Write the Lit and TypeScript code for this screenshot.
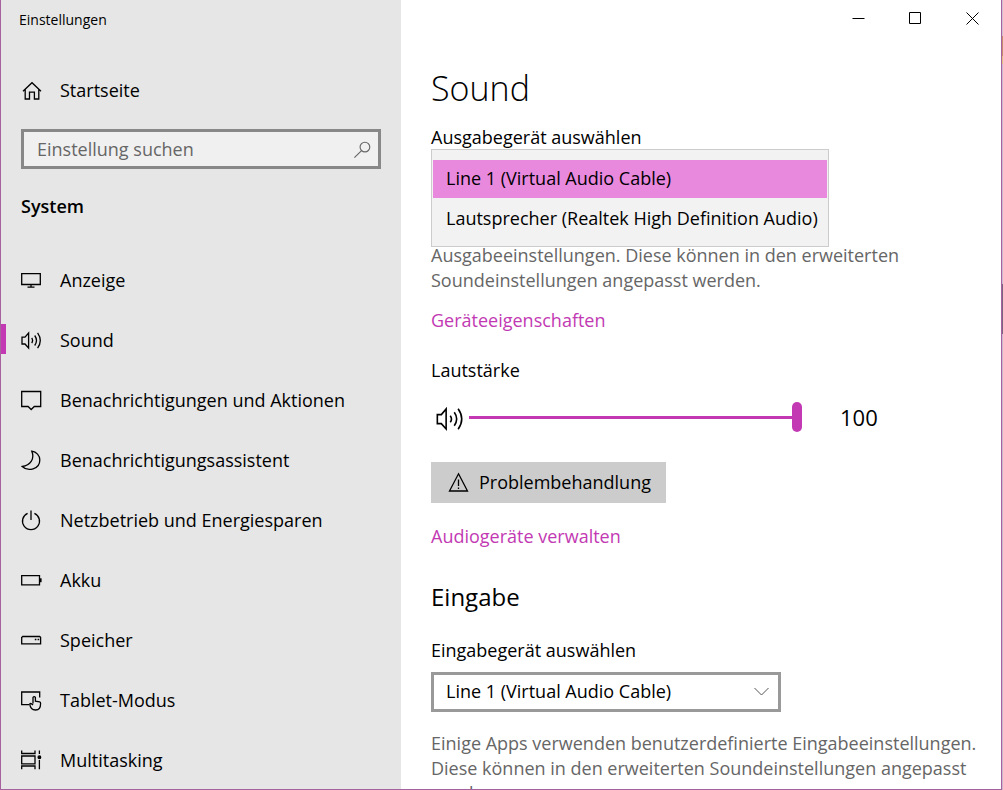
import { LitElement, html, css, svg } from "lit";
import { customElement, state } from "lit/decorators.js";

const speaker = svg`<path d="M1 7.200h3L7.600 3v15L4 14h-3z"/><path d="M10.700 8q1.800 2.500 0 5M13.700 5.500q3.600 5 0 10M16.600 2.800q5.400 7.700 0 15.400"/>`;

const pages = [
  { label: "Anzeige", icon: svg`<path d="M.7 3.700h18.600v10.800H.7zM10 14.500v2.600M6.500 17.100h7"/>` },
  { label: "Sound", icon: speaker, current: true },
  { label: "Benachrichtigungen und Aktionen", icon: svg`<path d="M.7 1.500h19v15h-6.400l-3.100 3-3.100-3H.7z"/>` },
  { label: "Benachrichtigungsassistent", icon: svg`<path d="M10.800 1.200c3.200 8-1.600 14.300-9.600 15.300 5.600 5.400 17.600 3 17.600-6.600 0-4.600-3.400-8-8-8.700z"/>` },
  { label: "Netzbetrieb und Energiesparen", icon: svg`<path d="M10 .500v9.500M6.600 3.300a8.500 8.500 0 1 0 6.800 0"/>` },
  { label: "Akku", icon: svg`<path d="M.7 5.700h17.800v9.100H.7z"/><path d="M19.700 8.300v3.900" stroke-width="1.800"/>` },
  { label: "Speicher", icon: svg`<path d="M.7 7.400l1-.9h16.900l1 .9v6.400H.7z"/><path d="M13.800 9.500h1.600M16.600 9.500h1.600" stroke-width="1.500"/>` },
  { label: "Tablet-Modus", icon: svg`<path d="M8.300 14.700H.7V2h18v5.500"/><path d="M12 13.500V7.400q1.200-1.600 2.400 0v3.700l4.200.8q1.100.3 1 1.600c0 3.500-.5 6.500-5 6.500-3.600 0-5.500-2.500-5.800-6q1-1.300 3.200 1"/>` },
  { label: "Multitasking", icon: svg`<path d="M.7.500v3h13.300v-3M.7 6h13.300v7.800H.7zM.7 19.300v-3.300h13.300v3.300M18.400.500v3.600M18.400 10v9.300"/><circle cx="18.400" cy="7.200" r="1.300" fill="currentColor"/>` },
];

const glyph = (body: unknown) =>
  html`<svg class="glyph" viewBox="0 0 21 21" aria-hidden="true">${body}</svg>`;

@customElement("app-root")
export class AppRoot extends LitElement {
  @state() private volume = 100;

  static styles = css`
    :host {
      --accent: #c239b3;
      --frame: #a5629c;
      display: block;
      height: 100vh;
      box-sizing: border-box;
      overflow: hidden;
      padding-right: 1px;
      background: linear-gradient(
        #d2bfd2 36px, #c98d6c 36px 56px, #e5bd7d 56px 64px, #cdb9cf 64px 284px,
        #7d657f 284px 334px, #cdb7cd 334px
      );
      color: #000;
      font: 18px/25px "Open Sans", "Noto Sans", sans-serif;
    }
    * { box-sizing: border-box; }
    .window {
      display: grid;
      grid-template-columns: 400px minmax(0, 1fr);
      height: 100%;
      border: solid var(--frame);
      border-width: 0 1px 1px;
      background: #fff;
      overflow: hidden;
    }
    .glyph {
      width: 21px;
      height: 21px;
      flex: none;
      fill: none;
      stroke: currentColor;
      stroke-width: 1.300;
    }
    .sidebar { background: #e6e6e6; overflow: hidden; }
    .title { height: 38px; font-size: 14px; line-height: 40px; padding-left: 18px; }
    .item {
      display: flex;
      align-items: center;
      gap: 18px;
      height: 60px;
      padding-left: 20px;
      color: inherit;
      text-decoration: none;
    }
    .home { margin-top: 22px; }
    .current {
      background: linear-gradient(var(--accent), var(--accent)) 0 14px / 5px 30px no-repeat;
    }
    .search {
      display: flex;
      align-items: center;
      height: 40px;
      margin: 9px 20px 25px;
      padding-right: 7px;
      border: 3px solid #888;
      background: #f0f0f0;
      color: #666;
    }
    .search input {
      flex: 1;
      min-width: 0;
      padding: 0 13px;
      border: 0;
      outline: 0;
      background: none;
      font: inherit;
      color: inherit;
    }
    .search input::placeholder { color: #666; opacity: 1; }
    .search .glyph { width: 17px; height: 17px; stroke-width: 1.400; }
    .group { margin: 0 20px 31px; font-size: 18px; font-weight: 600; line-height: 25px; }

    .main { overflow: hidden; }
    .caption { display: flex; justify-content: flex-end; height: 37px; margin-bottom: 1px; }
    .caption button {
      display: grid;
      place-items: center;
      width: 57px;
      padding: 0;
      border: 0;
      background: none;
      color: #000;
    }
    .caption svg { width: 13px; height: 13px; fill: none; stroke: currentColor; }
    .content { padding: 25px 16px 0 30px; max-width: 600px; }
    h1 { margin: 0 0 12px; font-size: 34px; font-weight: 300; line-height: 50px; }
    h2 { margin: 33px 0 26px; font-size: 24px; font-weight: 400; line-height: 30px; }
    .label { display: block; line-height: 24px; }
    .picker { position: relative; height: 94px; }
    .list {
      position: absolute;
      z-index: 1;
      width: 398px;
      max-width: 100%;
      height: 98px;
      padding: 10px 1px 8px;
      border: 1px solid #ccc;
      border-radius: 0;
      outline: 0;
      overflow: hidden;
      background: #f2f2f2;
      color: #000;
      font: inherit;
    }
    .list option { height: 38px; margin-bottom: 2px; padding: 6px 0 0 13px; }
    .list option:checked {
      background: linear-gradient(#e989de, #e989de);
      color: #000;
    }
    .note { margin: 0; color: #666; }
    .link { display: block; width: fit-content; color: var(--accent); text-decoration: none; }
    .props { margin: 15px 0 25px; }
    .volume { display: flex; align-items: center; height: 30px; margin: 20px 0 30px; padding-left: 5px; }
    .volume .glyph { width: 28px; height: 28px; margin: 4px 5px 0 0; stroke-width: 1.200; }
    .volume input {
      width: 333px;
      height: 30px;
      margin: 0 38px 0 0;
      appearance: none;
      background: none;
    }
    .volume input::-webkit-slider-runnable-track { height: 3px; background: var(--accent); }
    .volume input::-webkit-slider-thumb {
      appearance: none;
      width: 10px;
      height: 30px;
      margin-top: -14px;
      border-radius: 5px;
      background: var(--accent);
    }
    .volume output { font-size: 22px; }
    .trouble {
      display: flex;
      align-items: center;
      gap: 10px;
      height: 41px;
      margin-bottom: 21px;
      padding: 0 15px 0 17px;
      border: 0;
      background: #ccc;
      color: #000;
      font: inherit;
    }
    .field { position: relative; width: 350px; max-width: 100%; margin: 10px 0 19px; }
    .field select {
      display: block;
      width: 100%;
      height: 40px;
      padding: 0 36px 2px 12px;
      border: 3px solid #999;
      border-radius: 0;
      appearance: none;
      background: #fff;
      color: #000;
      font: inherit;
    }
    .chevron {
      position: absolute;
      right: 12px;
      top: 15px;
      width: 15px;
      height: 10px;
      fill: none;
      stroke: #555;
      pointer-events: none;
    }
  `;

  private onVolume(e: Event) {
    this.volume = Number((e.target as HTMLInputElement).value);
  }

  render() {
    return html`
      <div class="window">
        <aside class="sidebar">
          <div class="title">Einstellungen</div>
          <a class="item home" href="#start">
            ${glyph(svg`<path d="M2 11.200l9-8.500 9 8.500M4.200 9.200v9.800h4.300v-6.800h4.900V19h4.400V9.200"/>`)}
            <span>Startseite</span>
          </a>
          <label class="search">
            <input type="text" placeholder="Einstellung suchen" aria-label="Einstellung suchen" />
            ${glyph(svg`<circle cx="13.500" cy="7.500" r="6"/><path d="M9.300 11.800L.5 20.500"/>`)}
          </label>
          <h3 class="group">System</h3>
          <nav>
            ${pages.map(
              (p) => html`<a class="item ${p.current ? "current" : ""}" href="#${p.label}"
                >${glyph(p.icon)}<span>${p.label}</span></a
              >`
            )}
          </nav>
        </aside>

        <main class="main">
          <div class="caption">
            <button aria-label="Minimieren"><svg viewBox="0 0 13 13"><path d="M.5 6.500h12"/></svg></button>
            <button aria-label="Maximieren"><svg viewBox="0 0 13 13"><path d="M.5.500h11v11h-11z"/></svg></button>
            <button aria-label="Schließen"><svg viewBox="0 0 13 13"><path d="M.5.5l12 12M12.500.5l-12 12"/></svg></button>
          </div>
          <div class="content">
            <h1>Sound</h1>
            <label class="label" for="output">Ausgabegerät auswählen</label>
            <div class="picker">
              <select class="list" id="output" size="2">
                <option selected>Line 1 (Virtual Audio Cable)</option>
                <option>Lautsprecher (Realtek High Definition Audio)</option>
              </select>
            </div>
            <p class="note">
              Ausgabeeinstellungen. Diese können in den erweiterten Soundeinstellungen angepasst werden.
            </p>
            <a class="link props" href="#properties">Geräteeigenschaften</a>
            <label class="label" for="volume">Lautstärke</label>
            <div class="volume">
              ${glyph(speaker)}
              <input id="volume" type="range" min="0" max="100" .value=${String(this.volume)} @input=${this.onVolume} />
              <output for="volume">${this.volume}</output>
            </div>
            <button class="trouble">
              ${glyph(svg`<path d="M10.500 1.800L19.500 19h-18zM10.500 7.500v6.500M10.500 15.500v1.500"/>`)}
              <span>Problembehandlung</span>
            </button>
            <a class="link" href="#devices">Audiogeräte verwalten</a>
            <h2>Eingabe</h2>
            <label class="label" for="input">Eingabegerät auswählen</label>
            <div class="field">
              <select id="input">
                <option>Line 1 (Virtual Audio Cable)</option>
              </select>
              <svg class="chevron" viewBox="0 0 15 10" aria-hidden="true"><path d="M.5 1l7 7 7-7"/></svg>
            </div>
            <p class="note">
              Einige Apps verwenden benutzerdefinierte Eingabeeinstellungen. Diese können in den
              erweiterten Soundeinstellungen angepasst werden.
            </p>
          </div>
        </main>
      </div>
    `;
  }
}
